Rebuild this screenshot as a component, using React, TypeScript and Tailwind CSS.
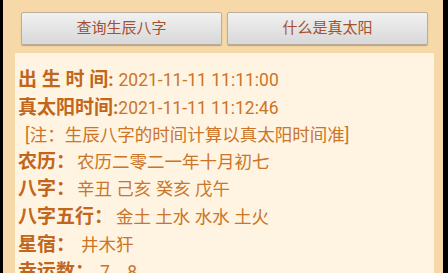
const rows: { label: string; value: string; gap: string }[] = [
  { label: '农历：', value: '农历二零二一年十月初七', gap: 'ml-[2px]' },
  { label: '八字：', value: '辛丑 己亥 癸亥 戊午', gap: 'ml-[2px]' },
  { label: '八字五行：', value: '金土 土水 水水 土火', gap: 'ml-[3px]' },
  { label: '星宿：', value: '井木犴', gap: 'ml-[6px]' },
  { label: '幸运数：', value: '7、8', gap: 'ml-[6px]' },
];

export default function App() {
  return (
    <div
      className="flex h-[273px] w-[448px] overflow-hidden bg-black"
      style={{ fontFamily: 'Roboto, "Noto Sans CJK SC", sans-serif' }}
    >
      <div className="ml-[3px] mr-[5px] flex flex-1 flex-col bg-[#f7d9a9]">
        {/* top buttons */}
        <div className="flex gap-[5px] pl-[18px] pr-[13px] pt-[12px]">
          <button className="h-[33px] w-[201px] rounded-[2px] border border-[#bcae98] bg-gradient-to-b from-[#f1f1f1] to-[#d8d8d8] text-[15px] text-[#a5502a] shadow-[0_1px_1px_rgba(120,90,50,0.45)]">
            查询生辰八字
          </button>
          <button className="h-[33px] w-[201px] rounded-[2px] border border-[#bcae98] bg-gradient-to-b from-[#f1f1f1] to-[#d8d8d8] text-[15px] text-[#a5502a] shadow-[0_1px_1px_rgba(120,90,50,0.45)]">
            什么是真太阳
          </button>
        </div>

        {/* info panel */}
        <div className="ml-[12px] mr-[9px] mt-[8px] flex-1 bg-[#fff4e2] pl-[3px] pt-[14px] leading-[26.6px] text-[#cb7528]">
          <div className="whitespace-nowrap">
            <span className="text-[19px] font-bold text-[#c2661b]">出 生 时 间:</span>
            <span className="ml-[5px] text-[17.5px]">2021-11-11 11:11:00</span>
          </div>
          <div className="whitespace-nowrap">
            <span className="text-[19px] font-bold text-[#c2661b]">真太阳时间:</span>
            <span className="text-[17.5px]">2021-11-11 11:12:46</span>
          </div>
          <div className="whitespace-nowrap pl-[7px] text-[17.5px]">[注：生辰八字的时间计算以真太阳时间准]</div>
          {rows.map((r) => (
            <div key={r.label} className="whitespace-nowrap">
              <span className="text-[19px] font-bold text-[#c2661b]">{r.label}</span>
              <span className={`${r.gap} text-[17.5px]`}>{r.value}</span>
            </div>
          ))}
        </div>
      </div>
    </div>
  );
}
